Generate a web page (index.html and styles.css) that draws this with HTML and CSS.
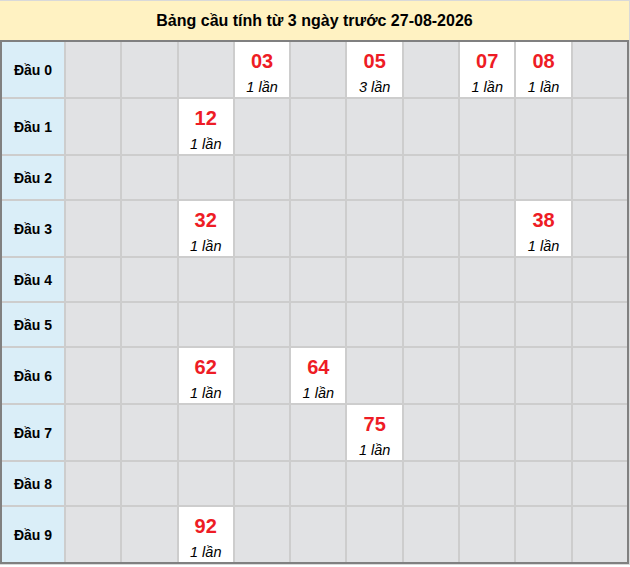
FILE: index.html
```html
<!DOCTYPE html>
<html lang="vi">
<head>
<meta charset="utf-8">
<title>Bảng cầu</title>
<link rel="stylesheet" href="styles.css">
</head>
<body>
<div class="wrap">
  <div class="title">Bảng cầu tính từ 3 ngày trước 27-08-2026</div>
  <div class="grid">
    <div class="lbl tall">Đầu 0</div>
    <div class="c"></div><div class="c"></div><div class="c"></div>
    <div class="c hit"><b>03</b><i>1 lần</i></div>
    <div class="c"></div>
    <div class="c hit"><b>05</b><i>3 lần</i></div>
    <div class="c"></div>
    <div class="c hit"><b>07</b><i>1 lần</i></div>
    <div class="c hit"><b>08</b><i>1 lần</i></div>
    <div class="c"></div>

    <div class="lbl tall">Đầu 1</div>
    <div class="c"></div><div class="c"></div>
    <div class="c hit"><b>12</b><i>1 lần</i></div>
    <div class="c"></div><div class="c"></div><div class="c"></div><div class="c"></div><div class="c"></div><div class="c"></div><div class="c"></div>

    <div class="lbl short">Đầu 2</div>
    <div class="c"></div><div class="c"></div><div class="c"></div><div class="c"></div><div class="c"></div><div class="c"></div><div class="c"></div><div class="c"></div><div class="c"></div><div class="c"></div>

    <div class="lbl tall">Đầu 3</div>
    <div class="c"></div><div class="c"></div>
    <div class="c hit"><b>32</b><i>1 lần</i></div>
    <div class="c"></div><div class="c"></div><div class="c"></div><div class="c"></div><div class="c"></div>
    <div class="c hit"><b>38</b><i>1 lần</i></div>
    <div class="c"></div>

    <div class="lbl short">Đầu 4</div>
    <div class="c"></div><div class="c"></div><div class="c"></div><div class="c"></div><div class="c"></div><div class="c"></div><div class="c"></div><div class="c"></div><div class="c"></div><div class="c"></div>

    <div class="lbl short">Đầu 5</div>
    <div class="c"></div><div class="c"></div><div class="c"></div><div class="c"></div><div class="c"></div><div class="c"></div><div class="c"></div><div class="c"></div><div class="c"></div><div class="c"></div>

    <div class="lbl tall">Đầu 6</div>
    <div class="c"></div><div class="c"></div>
    <div class="c hit"><b>62</b><i>1 lần</i></div>
    <div class="c"></div>
    <div class="c hit"><b>64</b><i>1 lần</i></div>
    <div class="c"></div><div class="c"></div><div class="c"></div><div class="c"></div><div class="c"></div>

    <div class="lbl tall">Đầu 7</div>
    <div class="c"></div><div class="c"></div><div class="c"></div><div class="c"></div><div class="c"></div>
    <div class="c hit"><b>75</b><i>1 lần</i></div>
    <div class="c"></div><div class="c"></div><div class="c"></div><div class="c"></div>

    <div class="lbl short">Đầu 8</div>
    <div class="c"></div><div class="c"></div><div class="c"></div><div class="c"></div><div class="c"></div><div class="c"></div><div class="c"></div><div class="c"></div><div class="c"></div><div class="c"></div>

    <div class="lbl tall">Đầu 9</div>
    <div class="c"></div><div class="c"></div>
    <div class="c hit"><b>92</b><i>1 lần</i></div>
    <div class="c"></div><div class="c"></div><div class="c"></div><div class="c"></div><div class="c"></div><div class="c"></div><div class="c"></div>
  </div>
</div>
</body>
</html>
```

FILE: styles.css
```css
html, body {
  margin: 0;
  padding: 0;
  background: #ffffff;
}
body {
  font-family: "Liberation Sans", Arial, sans-serif;
  color: #000;
}
.wrap {
  width: 629px;
  border-right: 1px solid #d9d9d9;
  border-top: 1px solid #d9d9d9;
  border-bottom: 1px solid #d9d9d9;
}
.title {
  height: 39px;
  line-height: 39px;
  background: #fff2c2;
  text-align: center;
  font-weight: bold;
  font-size: 16px;
}
.grid {
  display: grid;
  grid-template-columns: 62px repeat(10, 1fr);
  grid-template-rows: 55px 55px 43px 55px 43px 43px 55px 55px 43px 55px;
  gap: 2px;
  background: #cdcdcd;
  border: 2px solid #808080;
}
.lbl {
  background: #daeef8;
  font-weight: bold;
  font-size: 14px;
  display: flex;
  align-items: center;
  justify-content: center;
}
.c {
  background: #e1e2e4;
}
.c.hit {
  background: #ffffff;
  display: flex;
  flex-direction: column;
  align-items: center;
  padding-top: 6px;
  box-sizing: border-box;
}
.c.hit b {
  color: #ee1c25;
  font-size: 20px;
  line-height: 26px;
  font-weight: bold;
}
.c.hit i {
  font-size: 14.5px;
  line-height: 26px;
  font-style: italic;
}
```
